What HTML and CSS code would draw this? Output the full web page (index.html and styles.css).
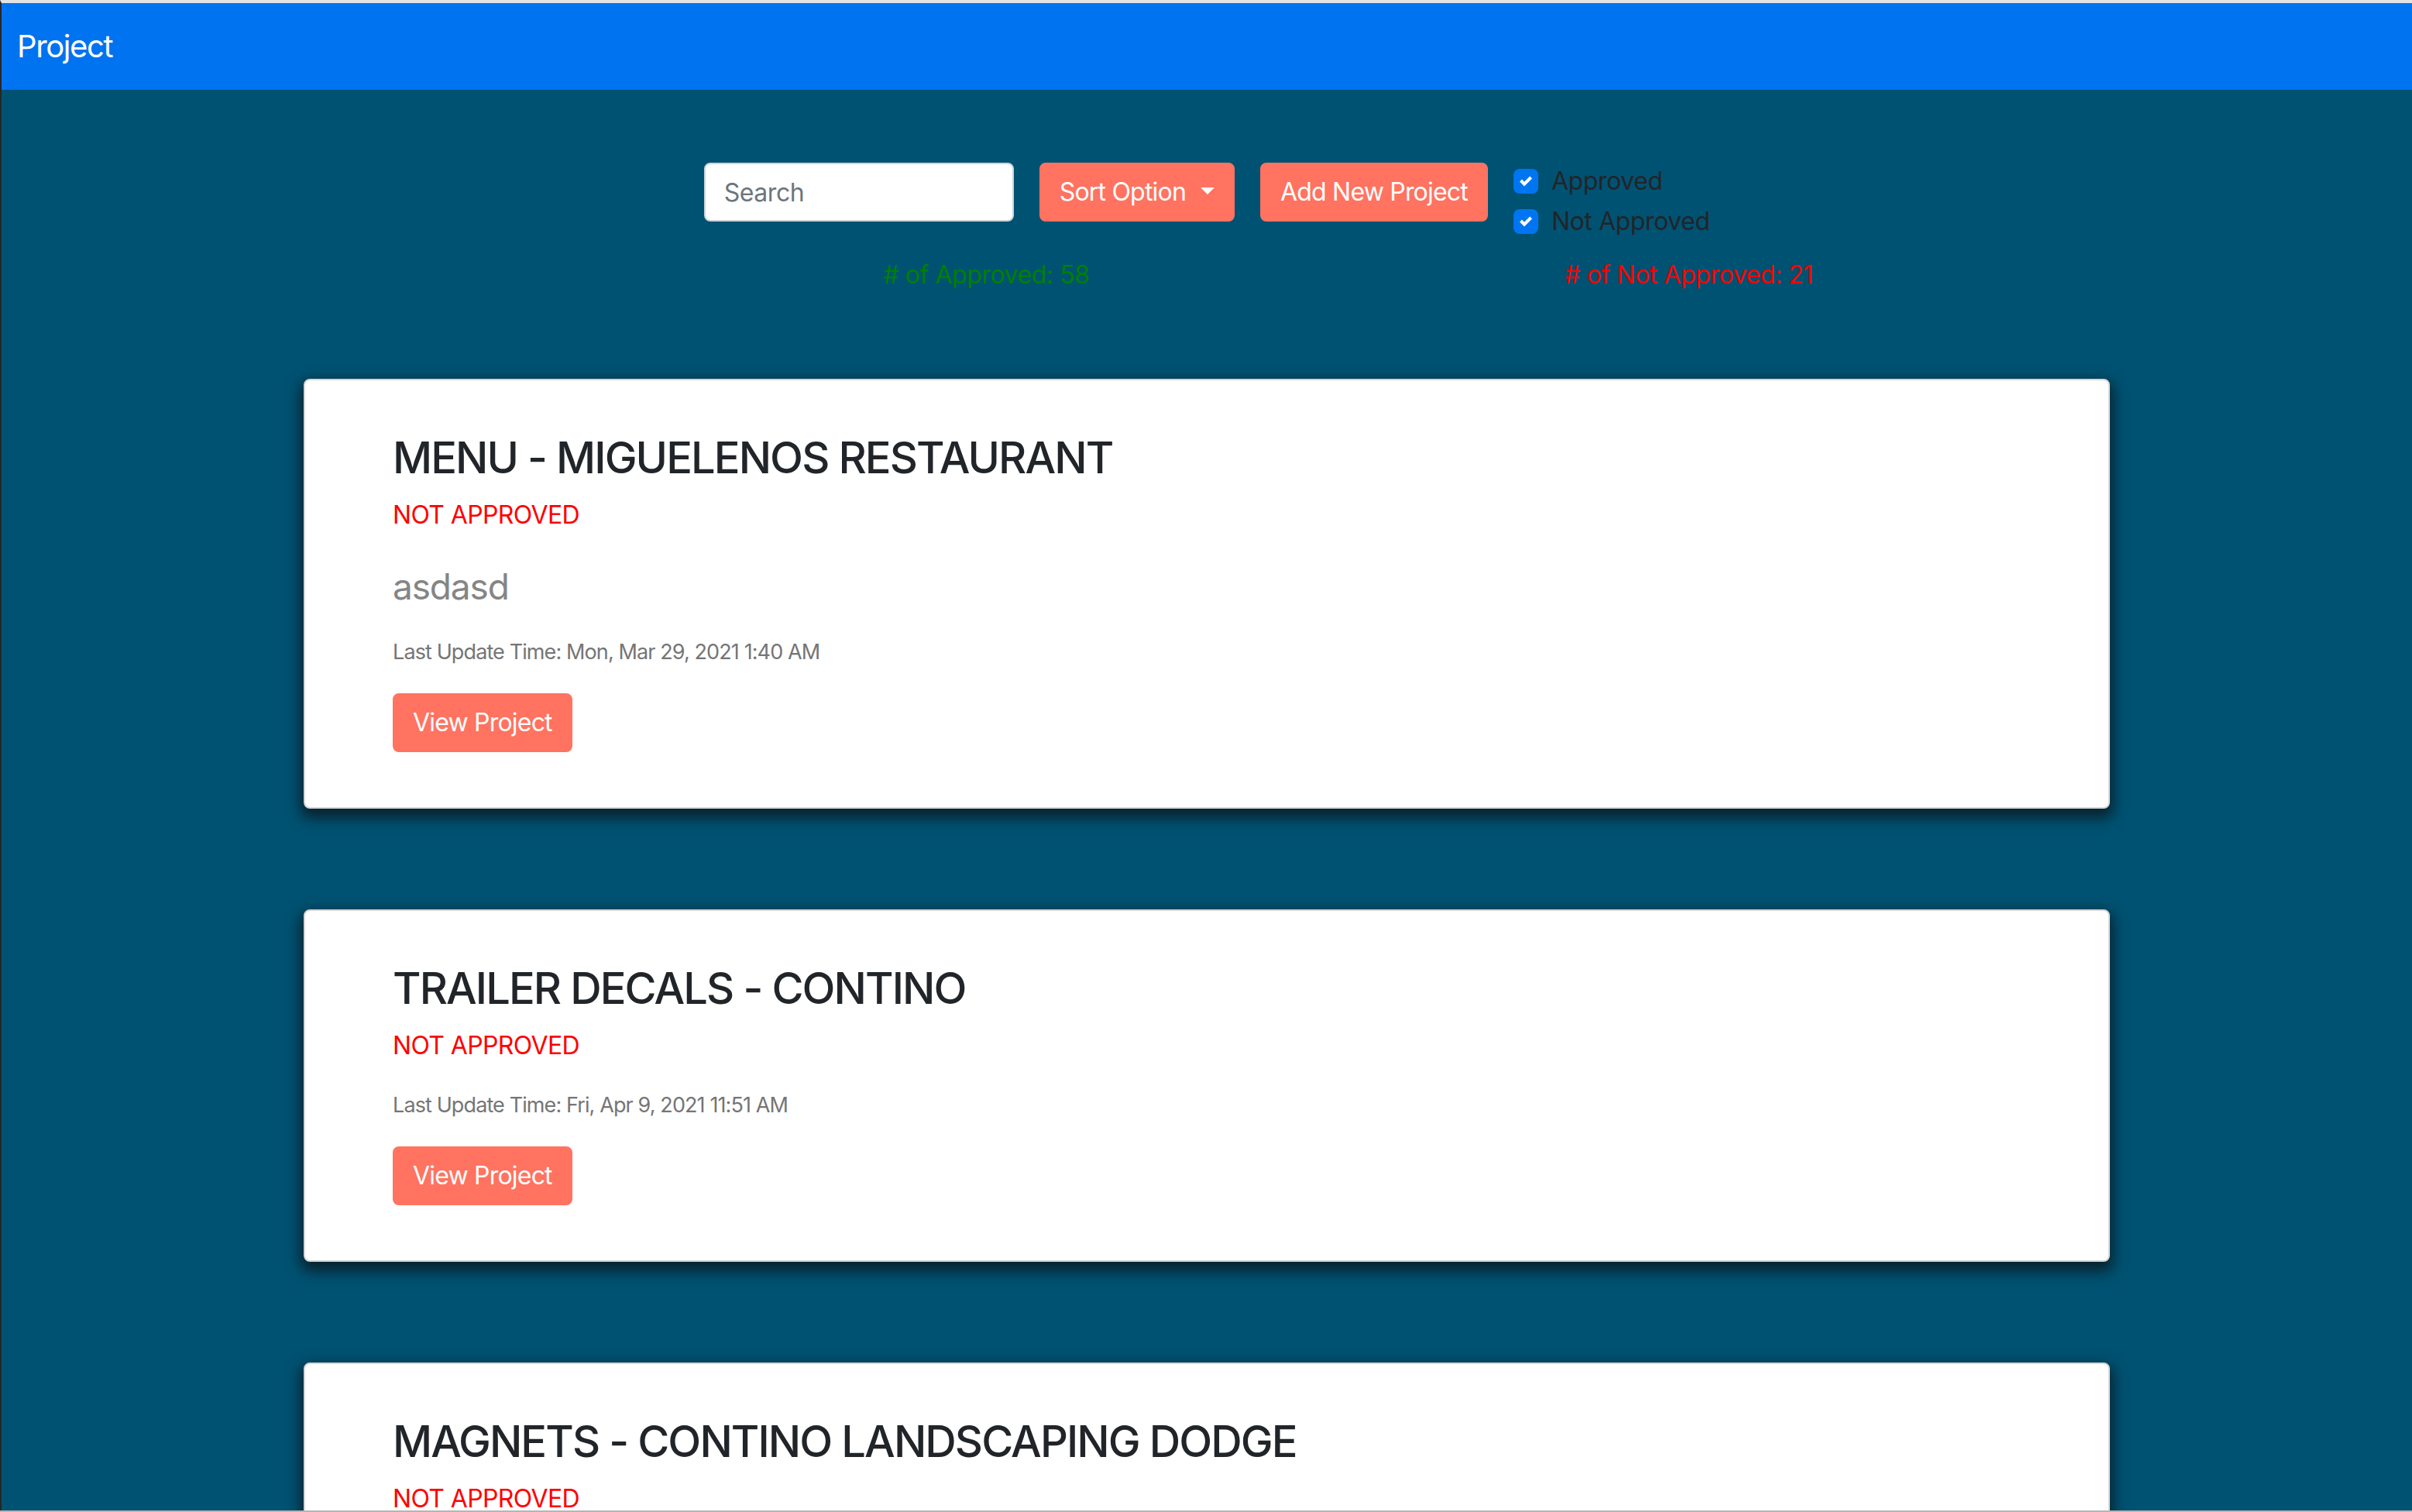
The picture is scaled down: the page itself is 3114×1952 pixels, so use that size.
FILE: index.html
```html
<!DOCTYPE html>
<html lang="en">
<head>
<meta charset="utf-8">
<title>Project</title>
<link rel="stylesheet" href="styles.css">
</head>
<body>
<div class="frame">
  <nav class="navbar"><span class="brand">Project</span></nav>
  <main class="content">
    <div class="toolbar">
      <input class="search" type="text" placeholder="Search">
      <button class="btn btn-dropdown">Sort Option<span class="caret"></span></button>
      <button class="btn">Add New Project</button>
      <div class="filters">
        <label class="check">
          <span class="box"><svg viewBox="0 0 8 8" width="16" height="16"><path fill="#fff" d="M6.564.75l-3.59 3.612-1.538-1.55L0 4.26l2.974 2.99L8 2.193z"/></svg></span>
          <span class="check-label">Approved</span>
        </label>
        <label class="check">
          <span class="box"><svg viewBox="0 0 8 8" width="16" height="16"><path fill="#fff" d="M6.564.75l-3.59 3.612-1.538-1.55L0 4.26l2.974 2.99L8 2.193z"/></svg></span>
          <span class="check-label">Not Approved</span>
        </label>
      </div>
    </div>
    <div class="counts">
      <span class="count count-approved"># of Approved: 58</span>
      <span class="count count-not"># of Not Approved: 21</span>
    </div>
    <div class="cards">
      <section class="card">
        <h3 class="card-title">MENU - MIGUELENOS RESTAURANT</h3>
        <p class="status">NOT APPROVED</p>
        <p class="desc">asdasd</p>
        <p class="time">Last Update Time: Mon, Mar 29, 2021 1:40 AM</p>
        <button class="btn">View Project</button>
      </section>
      <section class="card">
        <h3 class="card-title">TRAILER DECALS - CONTINO</h3>
        <p class="status">NOT APPROVED</p>
        <p class="time">Last Update Time: Fri, Apr 9, 2021 11:51 AM</p>
        <button class="btn">View Project</button>
      </section>
      <section class="card">
        <h3 class="card-title">MAGNETS - CONTINO LANDSCAPING DODGE</h3>
        <p class="status">NOT APPROVED</p>
        <p class="time">Last Update Time: Fri, Apr 9, 2021 11:51 AM</p>
        <button class="btn">View Project</button>
      </section>
    </div>
  </main>
  <div class="bottom-edge"></div>
</div>
</body>
</html>
```
FILE: styles.css
```css
html, body {
  margin: 0;
  padding: 0;
}
body {
  height: 1952px;
  overflow: hidden;
  background: #005272;
  font-family: Inter, "Noto Sans", "Liberation Sans", sans-serif;
  letter-spacing: -0.028em;
  color: #212529;
}
.frame {
  height: 1952px;
  box-sizing: border-box;
  border-top: 4px solid #e3e3e3;
  border-left: 2px solid #262626;
  background: #005272;
  overflow: hidden;
}
.navbar {
  background: #0073f0;
  padding: 26px 20px;
  height: 112px;
  box-sizing: border-box;
}
.brand {
  display: block;
  color: #fff;
  font-size: 40px;
  line-height: 60px;
  font-weight: 400;
  letter-spacing: -0.035em;
}
.content {
  padding-top: 94px;
}
.toolbar {
  display: flex;
  justify-content: center;
  align-items: flex-start;
  gap: 33px;
}
.search {
  width: 400px;
  height: 76px;
  box-sizing: border-box;
  border: 2px solid #ced4da;
  border-radius: 8px;
  padding: 12px 24px;
  font-family: inherit;
  letter-spacing: inherit;
  font-size: 32px;
  color: #495057;
  background: #fff;
  outline: none;
}
.search::placeholder {
  color: #6c757d;
}
.btn {
  display: inline-flex;
  align-items: center;
  height: 76px;
  box-sizing: border-box;
  border: 2px solid #ff7360;
  border-radius: 8px;
  background: #ff7360;
  color: #fff;
  font-family: inherit;
  letter-spacing: -0.025em;
  font-size: 32px;
  line-height: 48px;
  padding: 12px 24px;
  cursor: pointer;
}
.caret {
  display: inline-block;
  width: 0;
  height: 0;
  margin-left: 19px;
  border-top: 9px solid #fff;
  border-left: 9px solid transparent;
  border-right: 9px solid transparent;
  margin-top: -4px;
}
.filters {
  display: flex;
  flex-direction: column;
  gap: 4px;
}
.check {
  display: flex;
  align-items: flex-start;
  height: 48px;
  font-size: 32px;
  line-height: 48px;
  color: #212529;
}
.box {
  width: 32px;
  height: 32px;
  margin-top: 8px;
  margin-right: 17px;
  border-radius: 8px;
  background: #0075f2;
  display: flex;
  align-items: center;
  justify-content: center;
}
.counts {
  margin-top: 21px;
  margin-left: 818px;
  width: 1814px;
  display: grid;
  grid-template-columns: 1fr 1fr;
  text-align: center;
  font-size: 32px;
  line-height: 48px;
}
.count-approved {
  color: #008000;
}
.count-not {
  color: #ff0000;
}
.cards {
  margin-top: 110px;
  display: flex;
  flex-direction: column;
  align-items: center;
  gap: 130px;
}
.card {
  width: 2332px;
  box-sizing: border-box;
  background: #fff;
  border: 2px solid #d6d6d6;
  border-radius: 8px;
  padding: 67px 113px 71px;
  box-shadow: 0 8px 18px 4px rgba(12, 18, 22, 0.75);
}
.card-title {
  margin: 0 0 16px;
  font-size: 56px;
  line-height: 67px;
  font-weight: 500;
  letter-spacing: -0.034em;
  color: #212529;
}
.status {
  margin: 0 0 32px;
  font-size: 32px;
  line-height: 48px;
  letter-spacing: -0.02em;
  color: #ff0000;
}
.desc {
  margin: 0 0 28px;
  font-size: 46px;
  line-height: 72px;
  letter-spacing: -0.025em;
  color: #858585;
}
.time {
  margin: 0 0 32px;
  font-size: 27px;
  line-height: 42px;
  letter-spacing: -0.033em;
  color: #757575;
}
.bottom-edge {
  position: fixed;
  left: 0;
  right: 0;
  bottom: 0;
  height: 2px;
  background: #b5b5b5;
}
```
